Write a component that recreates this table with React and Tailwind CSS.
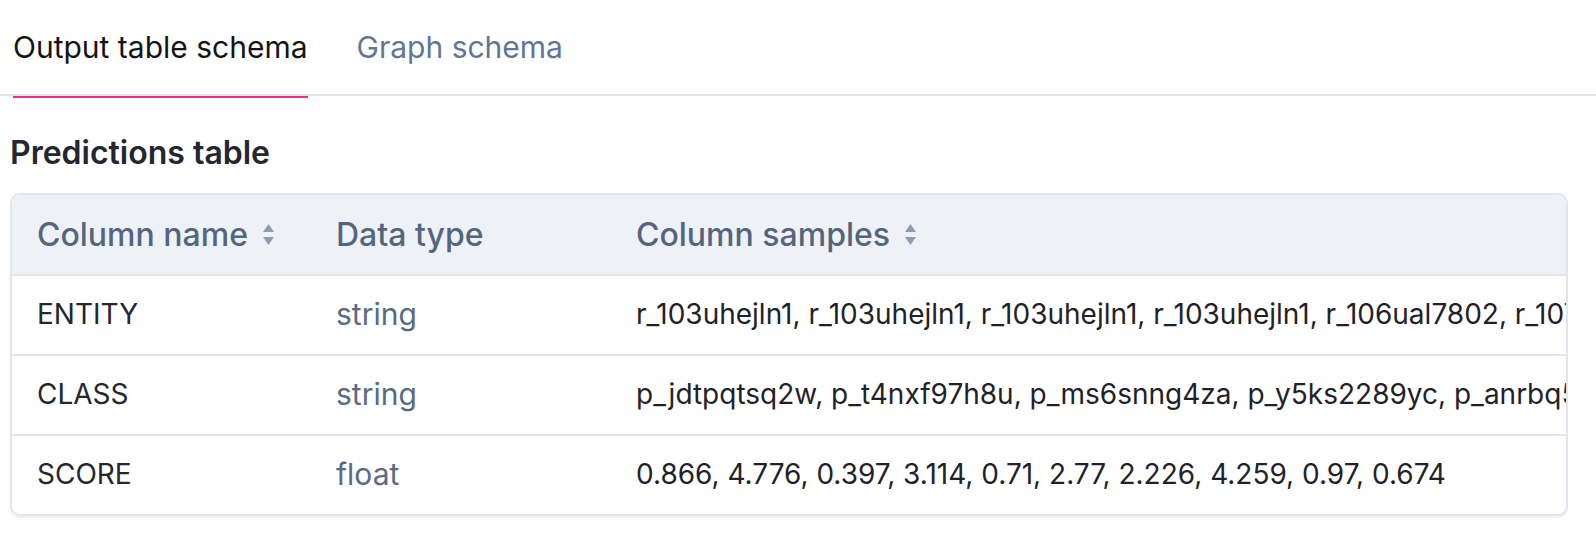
import React from "react";

const rows = [
  {
    name: "ENTITY",
    type: "string",
    samples:
      "r_103uhejln1, r_103uhejln1, r_103uhejln1, r_103uhejln1, r_106ual7802, r_107xq2hd9k, r_108bz7w1mn, r_109pl3k4ce",
  },
  {
    name: "CLASS",
    type: "string",
    samples:
      "p_jdtpqtsq2w, p_t4nxf97h8u, p_ms6snng4za, p_y5ks2289yc, p_anrbq5k2vt, p_x8d3mnq7fe, p_k2w9zr4hsu",
  },
  {
    name: "SCORE",
    type: "float",
    samples: "0.866, 4.776, 0.397, 3.114, 0.71, 2.77, 2.226, 4.259, 0.97, 0.674",
  },
];

function SortIcon() {
  return (
    <svg width="11" height="21" viewBox="0 0 11 21" className="shrink-0">
      <path d="M5.5 0 L11 8 L0 8 Z" fill="#8e9db5" />
      <path d="M0 13 L11 13 L5.5 21 Z" fill="#8e9db5" />
    </svg>
  );
}

export default function App() {
  return (
    <div className="w-[1596px] h-[536px] bg-white font-['Inter','Noto_Sans',sans-serif] overflow-hidden">
      <div className="relative flex h-[96px] gap-[49px] border-b-2 border-[#e0e7f2] pl-[13px]">
        <div className="relative flex h-full items-center text-[30px] text-[#141414]">
          Output table schema
          <span className="absolute left-0 right-0 top-[96px] h-[2px] bg-[#ee2f8d]" />
        </div>
        <div className="flex h-full items-center text-[30px] text-[#5f7697]">Graph schema</div>
      </div>

      <h2 className="mt-[38px] ml-[10px] text-[32px] leading-[38px] font-semibold text-[#23272f]">
        Predictions table
      </h2>

      <div className="mt-[21px] ml-[10px] mr-[28px] overflow-hidden rounded-[10px] border-2 border-[#e0e6ee] shadow-[0_2px_1px_rgba(0,0,0,0.06)]">
        <div className="grid h-[79px] grid-cols-[299px_300px_1fr] items-center bg-[#eef2f7] text-[32px] font-medium text-[#54657f]">
          <div className="flex items-center gap-[15px] pl-[25px]">
            <span>Column name</span>
            <SortIcon />
          </div>
          <div className="pl-[25px]">Data type</div>
          <div className="flex items-center gap-[15px] pl-[25px]">
            <span>Column samples</span>
            <SortIcon />
          </div>
        </div>
        {rows.map((r) => (
          <div
            key={r.name}
            className="grid h-[80px] grid-cols-[299px_300px_1fr] items-center border-t-2 border-[#e3e6ea] pb-[2px]"
          >
            <div className="pl-[25px] text-[28px] text-[#24272d]">{r.name}</div>
            <div className="pl-[25px] text-[30px] text-[#5a6a84]">{r.type}</div>
            <div className="min-w-0 overflow-hidden whitespace-nowrap pl-[25px] text-[28px] text-[#1f2228]">
              {r.samples}
            </div>
          </div>
        ))}
      </div>
    </div>
  );
}
